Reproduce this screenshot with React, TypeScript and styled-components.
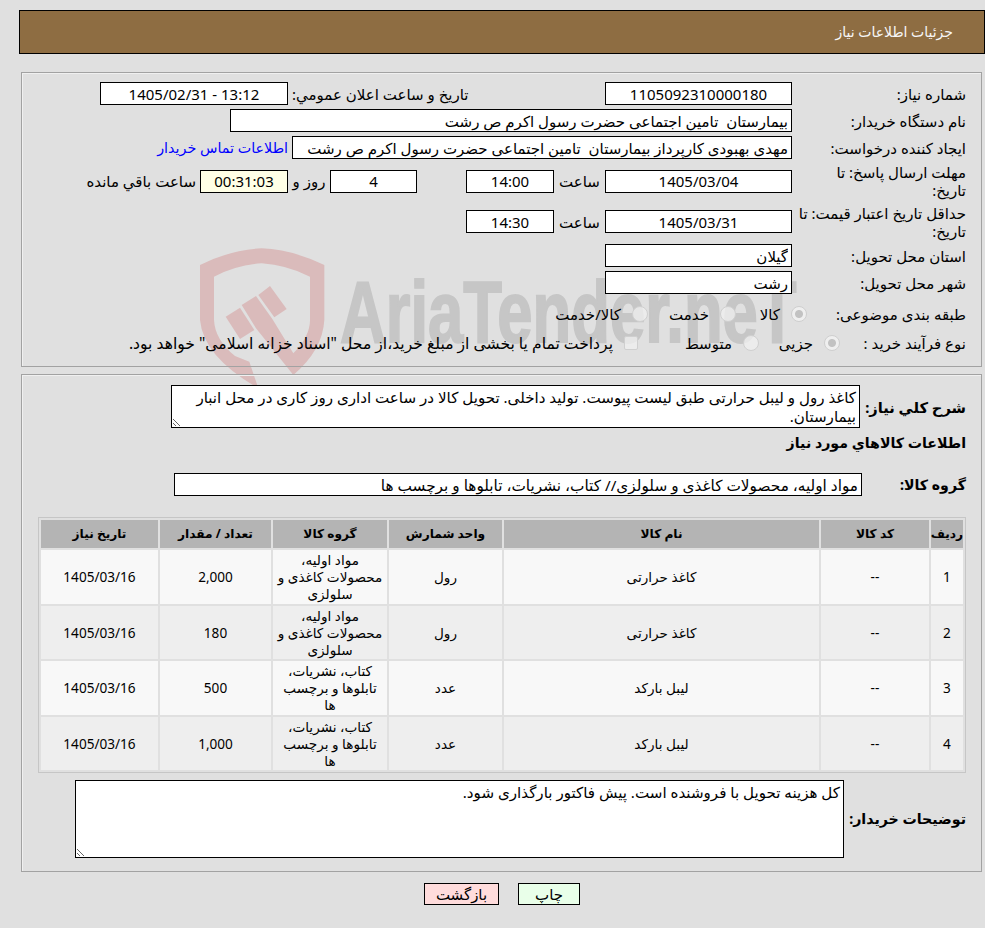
import styled, { createGlobalStyle } from "styled-components";

const GlobalStyle = createGlobalStyle`
  html, body {
    margin: 0;
    padding: 0;
    background-color: #e0e0e0;
  }
  body {
    font-family: "Noto Sans", "DejaVu Sans", sans-serif;
    font-size: 15px;
    line-height: 18px;
    color: #000;
  }
`;

const items = [
  { row: 1, name: "کاغذ حرارتی", unit: "رول", group: "مواد اولیه، محصولات کاغذی و سلولزی", amount: "2,000" },
  { row: 2, name: "کاغذ حرارتی", unit: "رول", group: "مواد اولیه، محصولات کاغذی و سلولزی", amount: "180" },
  { row: 3, name: "لیبل بارکد", unit: "عدد", group: "کتاب، نشریات، تابلوها و برچسب ها", amount: "500" },
  { row: 4, name: "لیبل بارکد", unit: "عدد", group: "کتاب، نشریات، تابلوها و برچسب ها", amount: "1,000" },
];

const columns = [32, 108, 315, 113, 114, 111, 117];

function Logo() {
  return (
    <Shield viewBox="0 0 480 480">
      <path d="M30,75 Q125,28 215,25 Q305,28 403,75 L403,240 Q398,330 310,405 L198,265 L155,195 L198,168 L247,237 L310,340 Q360,290 360,240 L360,110 Q290,75 215,70 Q140,75 72,110 L72,240 Q75,300 135,348 L178,365 L205,445 Q40,350 30,240 Z" />
      <path d="M107,230 L150,203 L193,270 L150,297 Z" />
      <path d="M205,165 L240,138 L290,207 L253,232 Z" />
    </Shield>
  );
}

export default function App() {
  return (
    <Page dir="rtl">
      <GlobalStyle />
      <Logo />
      <WatermarkText dir="ltr">AriaTender.neT</WatermarkText>
      <Content>
        <Header>جزئیات اطلاعات نیاز</Header>

        <Panel $top={9} $bottom={14}>
          <Rows>
            <Row>
              <Label>شماره نیاز:</Label>
              <Field $w={187} $center readOnly value="1105092310000180" />
              <Text $w={317} $end>تاریخ و ساعت اعلان عمومي:</Text>
              <Field $w={188} $center readOnly value="1405/02/31 - 13:12" dir="ltr" />
            </Row>
            <Row>
              <Label>نام دستگاه خریدار:</Label>
              <Field $w={562} readOnly value="بیمارستان  تامین اجتماعی حضرت رسول اکرم ص رشت" />
            </Row>
            <Row>
              <Label>ایجاد کننده درخواست:</Label>
              <Field $w={500} readOnly value="مهدی بهبودی کارپرداز بیمارستان  تامین اجتماعی حضرت رسول اکرم ص رشت" />
              <ContactLink href="#">اطلاعات تماس خریدار</ContactLink>
            </Row>
            <Row $h={36}>
              <Label>مهلت ارسال پاسخ: تا<br />تاریخ:</Label>
              <Field $w={187} $center readOnly value="1405/03/04" />
              <Text $w={51} $middle>ساعت</Text>
              <Field $w={88} $center readOnly value="14:00" />
              <Text $w={49} />
              <Field $w={87} $center readOnly value="4" />
              <Text $w={42} $middle>روز و</Text>
              <Field $w={88} $center $note readOnly value="00:31:03" />
              <Text $w={118}>ساعت باقي مانده</Text>
            </Row>
            <Row $h={37}>
              <Label>حداقل تاریخ اعتبار قیمت: تا<br />تاریخ:</Label>
              <Field $w={187} $center readOnly value="1405/03/31" />
              <Text $w={51} $middle>ساعت</Text>
              <Field $w={88} $center readOnly value="14:30" />
            </Row>
            <Row>
              <Label>استان محل تحویل:</Label>
              <Field $w={187} readOnly value="گیلان" />
            </Row>
            <Row>
              <Label>شهر محل تحویل:</Label>
              <Field $w={187} readOnly value="رشت" />
            </Row>
            <Row $h={32}>
              <Label $w={159}>طبقه بندی موضوعی:</Label>
              <Option $w={71}><Radio type="radio" name="kind" disabled defaultChecked />کالا</Option>
              <Option $w={88}><Radio type="radio" name="kind" disabled />خدمت</Option>
              <Option><Radio type="radio" name="kind" disabled />کالا/خدمت</Option>
            </Row>
            <Row $h={18}>
              <Label $w={126}>نوع فرآیند خرید :</Label>
              <Option $w={81}><Radio type="radio" name="process" disabled defaultChecked />جزیی</Option>
              <Option $w={121}><Radio type="radio" name="process" disabled />متوسط</Option>
              <Option $size={15.6}><Check type="checkbox" disabled />پرداخت تمام یا بخشی از مبلغ خرید،از محل "اسناد خزانه اسلامی" خواهد بود.</Option>
            </Row>
          </Rows>
        </Panel>

        <Panel $top={10} $bottom={13}>
          <BlockRow>
            <StrongLabel $w={106} $size={14.7}>شرح کلي نیاز:</StrongLabel>
            <Memo
              $w={689}
              $h={43}
              readOnly
              value="کاغذ رول و لیبل حرارتی طبق لیست پیوست. تولید داخلی. تحویل کالا در ساعت اداری روز کاری در محل انبار بیمارستان."
            />
          </BlockRow>
          <SectionTitle>اطلاعات کالاهاي مورد نیاز</SectionTitle>
          <GroupRow>
            <StrongLabel $w={104}>گروه کالا:</StrongLabel>
            <Field $w={688} $size={15.3} readOnly value="مواد اولیه، محصولات کاغذی و سلولزی// کتاب، نشریات، تابلوها و برچسب ها" />
          </GroupRow>
          <ItemsTable>
            <colgroup>
              {columns.map((w, i) => (
                <col key={i} style={{ width: w }} />
              ))}
            </colgroup>
            <thead>
              <tr>
                <HeadCell>ردیف</HeadCell>
                <HeadCell>کد کالا</HeadCell>
                <HeadCell>نام کالا</HeadCell>
                <HeadCell>واحد شمارش</HeadCell>
                <HeadCell>گروه کالا</HeadCell>
                <HeadCell>تعداد / مقدار</HeadCell>
                <HeadCell>تاریخ نیاز</HeadCell>
              </tr>
            </thead>
            <tbody>
              {items.map((item) => (
                <ItemRow key={item.row}>
                  <td>{item.row}</td>
                  <td>--</td>
                  <td>{item.name}</td>
                  <td>{item.unit}</td>
                  <td>{item.group}</td>
                  <td>{item.amount}</td>
                  <td>1405/03/16</td>
                </ItemRow>
              ))}
            </tbody>
          </ItemsTable>
          <BlockRow>
            <StrongLabel $w={122}>توضیحات خریدار:</StrongLabel>
            <Memo $w={769} $h={78} readOnly value="کل هزینه تحویل با فروشنده است. پیش فاکتور بارگذاری شود." />
          </BlockRow>
        </Panel>

        <Actions>
          <ActionButton $w={62} $bg="#e9ffe9">چاپ</ActionButton>
          <ActionButton $w={75} $bg="#ffdcdc">بازگشت</ActionButton>
        </Actions>
      </Content>
    </Page>
  );
}

const Page = styled.div`
  position: relative;
  height: 928px;
  overflow: hidden;
  background-color: #e0e0e0;
`;

const Shield = styled.svg`
  position: absolute;
  left: 190px;
  top: 240px;
  width: 160px;
  height: 160px;
  fill: #dabbbb;
`;

const WatermarkText = styled.div`
  position: absolute;
  left: 340px;
  top: 268px;
  font-family: "Liberation Sans", sans-serif;
  font-size: 88px;
  font-weight: 700;
  line-height: 88px;
  white-space: nowrap;
  color: #c6c6c6;
  -webkit-text-stroke: 2px #c6c6c6;
  transform: scaleX(0.72);
  transform-origin: left top;
`;

const Content = styled.div`
  position: relative;
  display: flex;
  flex-direction: column;
  padding: 10px 0 0 0;
`;

const Header = styled.div`
  display: flex;
  align-items: center;
  box-sizing: border-box;
  width: 966px;
  height: 44px;
  margin-bottom: 18px;
  align-self: flex-start;
  padding-right: 31px;
  border: 1px solid #000;
  background-color: #8e6d42;
  color: #f6f6f6;
  font-size: 14px;
`;

const Panel = styled.div<{ $top: number; $bottom: number }>`
  box-sizing: border-box;
  width: 961px;
  margin: 0 3px 7px 21px;
  align-self: flex-end;
  padding: ${(p) => p.$top}px 15px ${(p) => p.$bottom}px 14px;
  border: 1px solid #a2a2a2;
  box-shadow: inset 1px 1px 0 #f0f0f0;
`;

const Rows = styled.div`
  display: flex;
  flex-direction: column;
  gap: 4px;
`;

const Row = styled.div<{ $h?: number }>`
  display: flex;
  align-items: center;
  height: ${(p) => p.$h ?? 23}px;
`;

const Label = styled.div<{ $w?: number }>`
  flex: none;
  box-sizing: border-box;
  width: ${(p) => p.$w ?? 174}px;
`;

const Field = styled.input<{ $w: number; $center?: boolean; $note?: boolean; $size?: number }>`
  flex: none;
  box-sizing: border-box;
  width: ${(p) => p.$w}px;
  height: 23px;
  margin: 0;
  padding: 0 3px;
  border: 1px solid #000;
  border-radius: 0;
  outline: none;
  background-color: ${(p) => (p.$note ? "#ffffe6" : "#fff")};
  font: inherit;
  font-size: ${(p) => p.$size ?? 15}px;
  color: #000;
  text-align: ${(p) => (p.$center ? "center" : "right")};
`;

const Text = styled.div<{ $w: number; $end?: boolean; $middle?: boolean }>`
  flex: none;
  box-sizing: border-box;
  width: ${(p) => p.$w}px;
  padding: 0 4px;
  white-space: nowrap;
  text-align: ${(p) => (p.$end ? "left" : p.$middle ? "center" : "right")};
`;

const ContactLink = styled.a`
  margin-right: 4px;
  font-size: 14.3px;
  color: #0000ff;
  text-decoration: none;
  white-space: nowrap;
`;

const Option = styled.label<{ $w?: number; $size?: number }>`
  display: flex;
  flex: none;
  align-items: center;
  gap: 11px;
  width: ${(p) => (p.$w ? `${p.$w}px` : "auto")};
  font-size: ${(p) => p.$size ?? 15}px;
  white-space: nowrap;
`;

const Radio = styled.input`
  appearance: none;
  flex: none;
  width: 16px;
  height: 16px;
  margin: 0;
  border: 1px solid #cfcfcf;
  border-radius: 50%;
  background: rgba(240, 240, 240, 0.75);
  &:checked {
    background: radial-gradient(circle, #c2c2c2 0 3.5px, #efefef 4.5px);
  }
`;

const Check = styled.input`
  appearance: none;
  flex: none;
  width: 14px;
  height: 14px;
  margin: 0;
  border: 1px solid #cfcfcf;
  border-radius: 2px;
  background: rgba(240, 240, 240, 0.75);
`;

const BlockRow = styled.div`
  display: flex;
  align-items: center;
`;

const GroupRow = styled.div`
  display: flex;
  align-items: center;
  margin-top: 15px;
`;

const StrongLabel = styled.div<{ $w: number; $size?: number }>`
  flex: none;
  width: ${(p) => p.$w}px;
  font-size: ${(p) => p.$size ?? 14.2}px;
  font-weight: 700;
  white-space: nowrap;
`;

const Memo = styled.textarea<{ $w: number; $h: number }>`
  display: block;
  flex: none;
  box-sizing: border-box;
  width: ${(p) => p.$w}px;
  height: ${(p) => p.$h}px;
  margin: 0;
  padding: 2px 3px;
  border: 1px solid #000;
  border-radius: 0;
  outline: none;
  background-color: #fff;
  font: inherit;
  font-size: 15.1px;
  line-height: 19px;
  color: #000;
`;

const SectionTitle = styled.div`
  height: 30px;
  font-size: 14.2px;
  font-weight: 700;
  line-height: 30px;
`;

const ItemsTable = styled.table`
  box-sizing: border-box;
  width: 928px;
  margin: 21px 0 7px;
  border: 1px solid #c6c6c6;
  border-spacing: 2px;
  table-layout: fixed;
  text-align: center;
  font-size: 13.6px;
`;

const HeadCell = styled.th`
  height: 28px;
  padding: 0;
  background-color: #b4b4b4;
  font-size: 12.2px;
  font-weight: 700;
  white-space: nowrap;
`;

const ItemRow = styled.tr`
  background-color: #f8f8f8;
  &:nth-child(even) {
    background-color: #eeeeee;
  }
  td {
    height: 53.5px;
    padding: 0 3px;
    line-height: 17px;
  }
`;

const Actions = styled.div`
  display: flex;
  justify-content: center;
  gap: 19px;
  width: 966px;
  align-self: flex-start;
  margin-top: 4px;
`;

const ActionButton = styled.button<{ $w: number; $bg: string }>`
  box-sizing: border-box;
  width: ${(p) => p.$w}px;
  height: 22px;
  padding: 0;
  border: 1px solid #000;
  border-radius: 0;
  background-color: ${(p) => p.$bg};
  font: inherit;
  color: #000;
`;
